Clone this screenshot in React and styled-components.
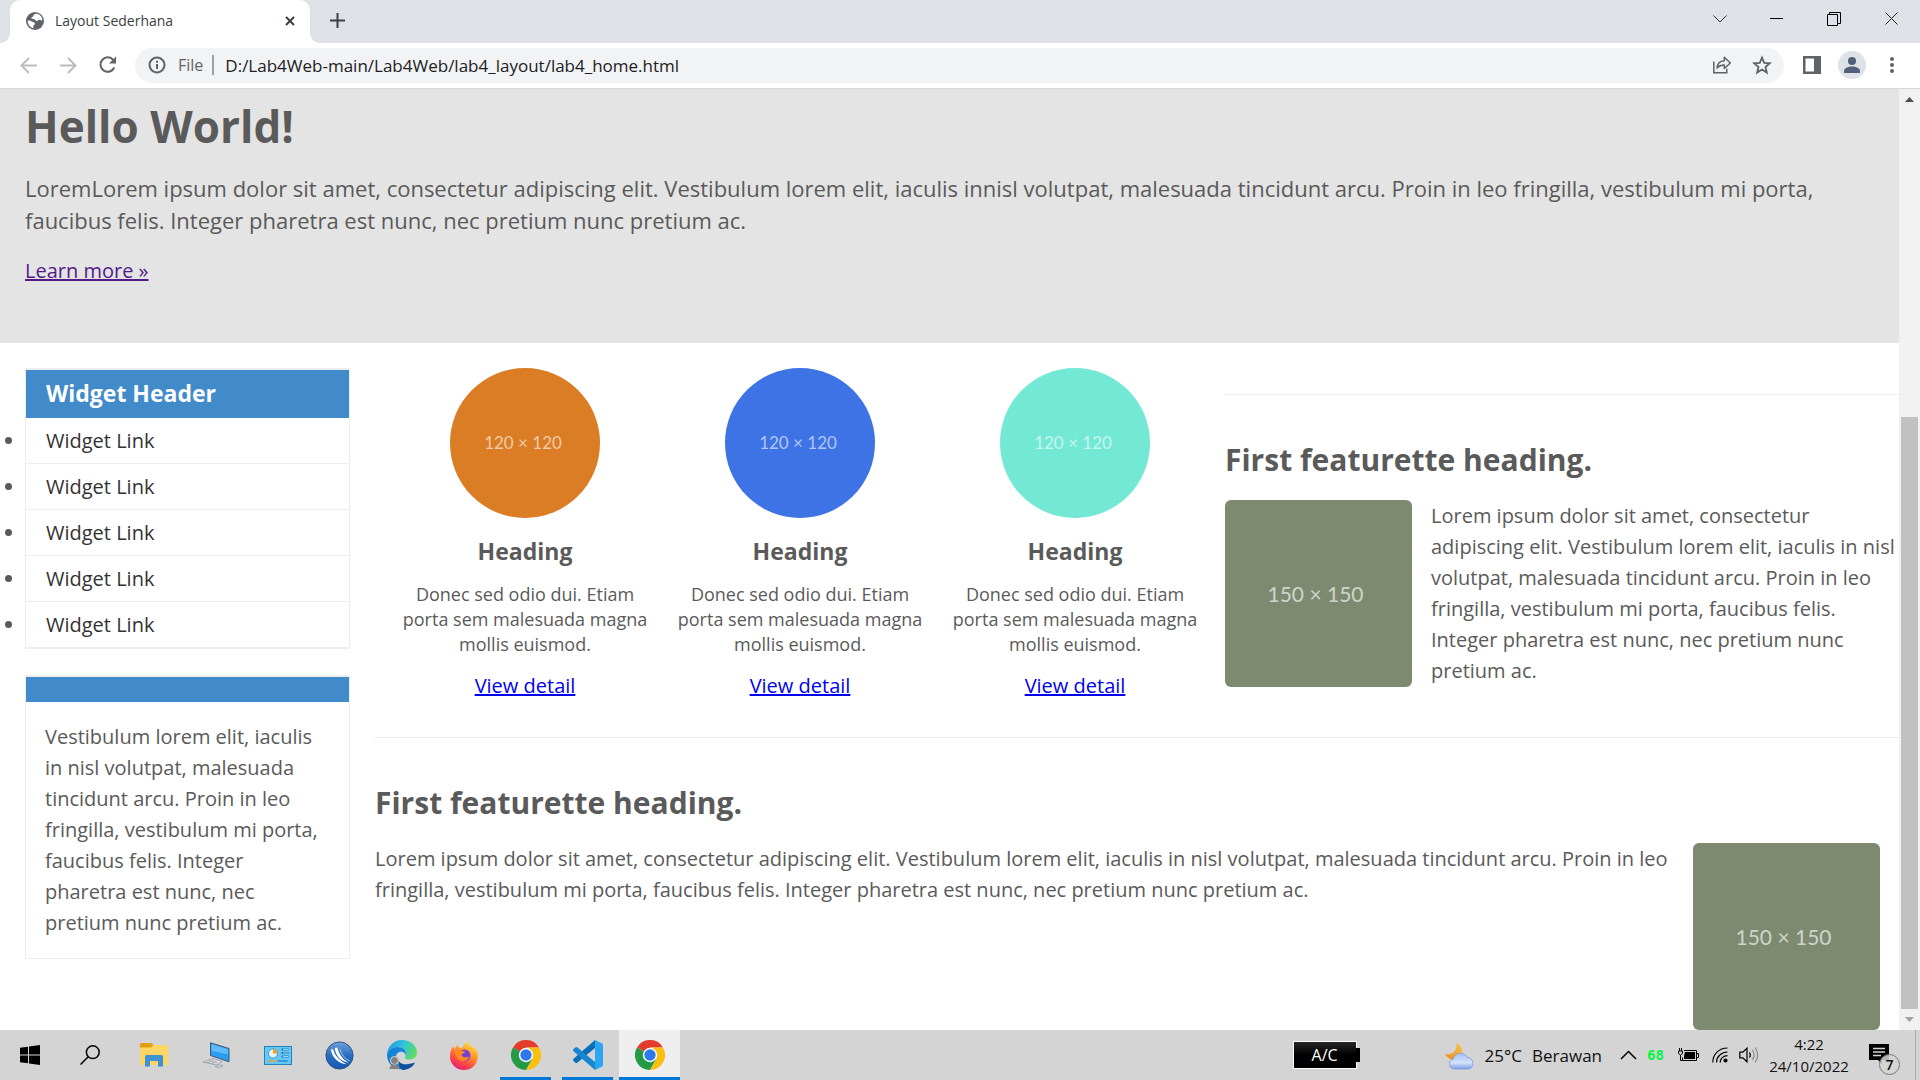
import React from 'react';
import styled, { createGlobalStyle } from 'styled-components';

const GlobalStyle = createGlobalStyle`
  * { box-sizing: border-box; }
  html, body { margin: 0; padding: 0; }
  body { background: #fff; font-family: "Open Sans", "Noto Sans", sans-serif; }
  h1, h2, h3, p, ul { margin: 0; padding: 0; }
  button { border: 0; padding: 0; background: none; font: inherit; color: inherit; }
  svg { display: block; }
`;

const Screen = styled.div`
  display: flex;
  flex-direction: column;
  height: 100vh;
  overflow: hidden;
`;

/* ---------- browser frame ---------- */

const TabStrip = styled.div`
  display: flex;
  height: 43px;
  padding-left: 10px;
  background: #dee1e6;
  color: #3c4043;
`;

const Tab = styled.div`
  position: relative;
  display: flex;
  align-items: center;
  width: 300px;
  height: 43px;
  padding: 0 12px 2px 16px;
  border-radius: 10px 10px 0 0;
  background: #fff;
  &::before, &::after {
    content: "";
    position: absolute;
    bottom: 0;
    width: 10px;
    height: 10px;
  }
  &::before {
    left: -10px;
    background: radial-gradient(circle at 0 0, transparent 10px, #fff 10px);
  }
  &::after {
    right: -10px;
    background: radial-gradient(circle at 100% 0, transparent 10px, #fff 10px);
  }
`;

const TabTitle = styled.span`
  flex: 1;
  padding-left: 11px;
  font-size: 14px;
  line-height: 20px;
`;

const IconButton = styled.button`
  display: flex;
  flex: none;
  align-items: center;
  justify-content: center;
  width: ${(p) => p.$w || 40}px;
  height: ${(p) => p.$h || 34}px;
  color: ${(p) => p.$color || '#5f6368'};
`;

const WindowButtons = styled.div`
  display: flex;
  margin-left: auto;
  color: #111;
`;

const Toolbar = styled.div`
  display: flex;
  align-items: center;
  height: 46px;
  padding: 1px 8px 2px;
  border-bottom: 1px solid #d5d7da;
  background: #fff;
`;

const Omnibox = styled.div`
  display: flex;
  flex: 1;
  align-items: center;
  height: 35px;
  margin: 0 8px 0 7px;
  padding: 0 2px 0 13px;
  border-radius: 18px;
  background: #f1f3f4;
`;

const Scheme = styled.label`
  padding: 0 9px 0 12px;
  border-right: 2px solid #9aa0a6;
  font-size: 16px;
  line-height: 20px;
  color: #5f6368;
`;

const UrlInput = styled.input`
  flex: 1;
  min-width: 0;
  padding: 1px 0 0 11px;
  border: 0;
  outline: 0;
  background: none;
  font: 17px/24px "Open Sans", sans-serif;
  color: #202124;
`;

/* ---------- web page ---------- */

const Viewport = styled.div`
  display: flex;
  flex: 1;
  min-height: 0;
`;

const Page = styled.div`
  flex: 1;
  min-width: 0;
  overflow: hidden;
  background: #fff;
  font-size: 20px;
  line-height: 31px;
  color: #5a5a5a;
`;

const Hero = styled.section`
  padding: 7px 25px 57px;
  background: #e4e4e4;
`;

const HeroTitle = styled.h1`
  margin-bottom: 16px;
  font-size: 44px;
  line-height: 60px;
`;

const HeroText = styled.p`
  margin-bottom: 19px;
  font-size: 22px;
  line-height: 32px;
`;

const HeroLink = styled.a`
  display: inline-block;
  line-height: 30px;
  color: #551a8b;
`;

const Columns = styled.div`
  display: flex;
  align-items: flex-start;
  gap: 25px;
  padding: 25px 0 0 25px;
`;

const Sidebar = styled.aside`
  display: grid;
  flex: none;
  gap: 26px;
  width: 325px;
`;

const Widget = styled.section`
  border: 1px solid #eee;
`;

const WidgetTitle = styled.h3`
  min-height: 26px;
  padding: 8px 20px 10px;
  border-top: 1px solid #eee;
  background: #428bca;
  font-size: 23px;
  line-height: 30px;
  color: #fff;
`;

const WidgetLink = styled.li`
  height: 46px;
  padding: 7px 20px;
  border-bottom: 1px solid #eee;
  a { color: #333; text-decoration: none; }
`;

const WidgetText = styled.p`
  padding: 19px 19px 20px;
`;

const Main = styled.main`
  flex: 1;
  min-width: 0;
`;

const TopRow = styled.div`
  display: grid;
  grid-template-columns: repeat(3, 250px) 1fr;
  gap: 25px;
  margin-bottom: 36px;
  padding-left: 25px;
`;

const Box = styled.article`
  display: flex;
  flex-direction: column;
  align-items: center;
  text-align: center;
`;

const Circle = styled.div`
  width: 150px;
  height: 150px;
  padding-right: 4px;
  border-radius: 50%;
  background: ${(p) => p.$color};
  font-family: Lato, "Open Sans", sans-serif;
  font-size: 17px;
  line-height: 150px;
  color: rgba(255, 255, 255, 0.6);
`;

const BoxTitle = styled.h3`
  margin: 17px 0 15px;
  font-size: 23px;
  line-height: 32px;
`;

const BoxText = styled.p`
  margin-bottom: 14px;
  font-size: 18px;
  line-height: 25px;
`;

const BoxLink = styled.a`
  line-height: 30px;
  color: #0000ee;
`;

const Feature = styled.section`
  padding-top: ${(p) => p.$top || 0}px;
`;

const FeatureTitle = styled.h2`
  padding: 45px 0 20px;
  border-top: 1px solid #eee;
  font-size: 30px;
  line-height: 40px;
`;

const FeatureBody = styled.div`
  display: flex;
  flex-direction: ${(p) => (p.$reverse ? 'row-reverse' : 'row')};
  align-items: flex-start;
  gap: 19px;
  padding-right: ${(p) => (p.$reverse ? 19 : 0)}px;
  p { flex: 1; }
`;

const Square = styled.div`
  flex: none;
  width: 187px;
  height: 187px;
  padding-right: 6px;
  border-radius: 6px;
  background: #7d8a70;
  font-family: Lato, "Open Sans", sans-serif;
  font-size: 21px;
  line-height: 187px;
  text-align: center;
  color: rgba(255, 255, 255, 0.65);
`;

const Scrollbar = styled.div`
  display: flex;
  flex: none;
  flex-direction: column;
  width: 21px;
  padding: 0 2px;
  background: #f1f1f1;
`;

const TrackGap = styled.div`
  flex: 307;
`;

const Thumb = styled.div`
  flex: 592;
  background: #c1c1c1;
`;

/* ---------- taskbar ---------- */

const Taskbar = styled.footer`
  display: flex;
  flex: none;
  height: 50px;
  background: #d4d4d4;
  color: #111;
`;

const TaskGroup = styled.div`
  display: flex;
  padding-left: 3px;
`;

const TaskButton = styled.button`
  display: flex;
  align-items: center;
  justify-content: center;
  width: ${(p) => p.$w || 61}px;
  height: 50px;
  margin-right: 1px;
  background: ${(p) => (p.$active ? '#eeeeee' : 'none')};
  box-shadow: ${(p) => (p.$active ? 'inset 0 -3px #0078d7' : 'none')};
`;

const RunningMark = styled.span`
  display: flex;
  align-items: center;
  justify-content: center;
  width: 51px;
  height: 50px;
  box-shadow: inset 0 -3px #0078d7;
`;

const Tray = styled.div`
  display: flex;
  align-items: center;
  margin-left: auto;
  border-right: 1px solid #a9a9a9;
  margin-right: 4px;
`;

const PowerBadge = styled.div`
  position: relative;
  width: 64px;
  height: 28px;
  margin-right: 88px;
  border: 1px solid #fff;
  background: linear-gradient(#262626, #000 50%);
  font-size: 16px;
  line-height: 26px;
  text-align: center;
  color: #fff;
  &::after {
    content: "";
    position: absolute;
    top: 6px;
    right: -4px;
    width: 4px;
    height: 14px;
    background: #000;
  }
`;

const Weather = styled.button`
  display: flex;
  align-items: center;
  gap: 10px;
  margin-right: 15px;
  padding-top: 2px;
  font-size: 17px;
  line-height: 24px;
`;

const Counter = styled.span`
  width: 33px;
  font: bold 14px/20px "DejaVu Sans Mono", monospace;
  color: #00f83c;
  text-align: center;
`;

const Clock = styled.button`
  width: 92px;
  padding-bottom: 1px;
  font-size: 15px;
  line-height: 22px;
  text-align: center;
`;

const Notifications = styled.button`
  position: relative;
  width: 34px;
  height: 50px;
  margin: 0 12px 0 14px;
`;

const Badge = styled.span`
  position: absolute;
  top: 24px;
  left: 10px;
  width: 21px;
  height: 21px;
  border: 1px solid #777;
  border-radius: 50%;
  background: rgba(212, 212, 212, 0.85);
  font-size: 14px;
  font-weight: 600;
  line-height: 19px;
  text-align: center;
`;

const MessageHolder = styled.span`
  display: block;
  padding-bottom: 2px;
`;

/* ---------- drawings ---------- */

const Line = ({ w, h = w, d, sw = 2, ...rest }) => (
  <svg width={w} height={h} viewBox={`0 0 ${w} ${h}`} fill="none" stroke="currentColor" strokeWidth={sw} {...rest}>
    <path d={d} />
  </svg>
);

const GlobeIcon = () => (
  <svg width="18" height="18" viewBox="0 0 18 18">
    <circle cx="9" cy="9" r="9" fill="#5f6368" />
    <path d="M10 1.600c-1 1-2.600.7-2.600 2.200 0 1.300-2 .8-2 2.200s1.400 1 2.800 1.200c1.400.2 1 1.700 2.600 1.700 1.200 0 1.300-1.200 2.600-1.200 1.400 0 1.800.8 3 .8A7.400 7.400 0 0 0 10 1.600zM1.700 8.600c1.600-.2 3 .2 4.200 1 1.400.9 3 .6 3 2.200 0 1.400-1.600 1.200-1.600 2.600v1.800A7.400 7.400 0 0 1 1.700 8.600z" fill="#fff" />
  </svg>
);

const ReloadIcon = () => (
  <svg width="20" height="20" viewBox="0 0 20 20" fill="none">
    <path d="M16.300 12.500A7.200 7.200 0 1 1 15.300 5" stroke="#5f6368" strokeWidth="2" />
    <path d="M18 1.500v7h-7z" fill="#5f6368" />
  </svg>
);

const InfoIcon = () => (
  <svg width="18" height="18" viewBox="0 0 18 18" fill="none" stroke="#5f6368" strokeWidth="2">
    <circle cx="9" cy="9" r="7.500" />
    <path d="M9 8v5M9 4.800v2" />
  </svg>
);

const ShareIcon = () => (
  <svg width="20" height="20" viewBox="0 0 20 20" fill="none" stroke="#5f6368" strokeWidth="1.500">
    <path d="M1.800 6.500v11.200h13v-4" />
    <path d="M5 13c.4-4.500 3-7 7.300-7.300V2.300L18.300 8l-6 5.500V10C9 10 7 10.800 5 13z" strokeLinejoin="round" />
  </svg>
);

const StarIcon = () => (
  <svg width="20" height="20" viewBox="0 0 20 20" fill="none" stroke="#5f6368" strokeWidth="1.800">
    <path d="M10 2.600l2.200 5.200 5.600.5-4.300 3.700 1.300 5.500L10 14.600l-4.800 2.900L6.500 12 2.200 8.300l5.600-.5z" />
  </svg>
);

const PanelIcon = () => (
  <svg width="18" height="18" viewBox="0 0 18 18">
    <path d="M0 0h18v18H0zM2.500 2.500v13h8.500v-13z" fillRule="evenodd" fill="#5f6368" />
  </svg>
);

const AvatarIcon = () => (
  <svg width="28" height="28" viewBox="0 0 28 28">
    <circle cx="14" cy="14" r="14" fill="#dee1e6" />
    <circle cx="14" cy="10" r="4" fill="#50607a" />
    <path d="M6 22v-2c0-3 4-4.500 8-4.500s8 1.500 8 4.500v2z" fill="#50607a" />
  </svg>
);

const DotsIcon = () => (
  <svg width="4" height="18" viewBox="0 0 4 18" fill="#5f6368">
    <circle cx="2" cy="3" r="2" /><circle cx="2" cy="9" r="2" /><circle cx="2" cy="15" r="2" />
  </svg>
);

const RestoreIcon = () => (
  <svg width="14" height="14" viewBox="0 0 14 14" fill="none" stroke="#000" strokeWidth="1">
    <path d="M.5 2.500h10v11H.5zM2.500 2.500v-2h11v11h-2.500" />
  </svg>
);

const WindowsIcon = () => (
  <svg width="20" height="20" viewBox="0 0 20 20">
    <path d="M0 2.800L8 1.700v7.800H0zM9 1.500L20 0v9.500H9zM0 10.500h8v7.800l-8-1.100zM9 10.500h11V20L9 18.500z" />
  </svg>
);

const FolderIcon = () => (
  <svg width="28" height="24" viewBox="0 0 28 24">
    <path d="M0 1.500Q0 0 1.500 0h10L13.500 2 12 5H0z" fill="#e0a010" />
    <path d="M0 4.500h11l2.500-2.500H28v20H0z" fill="#ffd666" />
    <path d="M5 23.500V13.500q0-1.500 1.500-1.500h15q1.500 0 1.500 1.500v10h-5v-5.500h-8v5.500z" fill="#3c92d4" />
  </svg>
);

const LaptopIcon = () => (
  <svg width="28" height="27" viewBox="0 0 28 27">
    <path d="M8.500.8L27 6.500v13.300L8.500 13.500z" fill="#2a9df0" stroke="#44566a" strokeWidth="1" />
    <path d="M9.500 2.300l16.500 5v5L9.500 9z" fill="#5cbcfb" />
    <path d="M1 20l10-3.500 9 3-5 3.500z" fill="#dfe3e7" stroke="#8b949c" strokeWidth=".7" />
    <path d="M4 20l9 2.500M7 18.500l9 2.700M5 21l7-3.500M9 22l6-3.500" stroke="#9aa3ab" strokeWidth=".7" />
    <path d="M13 24.500l4-2 4 1.300-3.500 2z" fill="#c9ced3" stroke="#8b949c" strokeWidth=".6" />
  </svg>
);

const PanelAppIcon = () => (
  <svg width="28" height="19" viewBox="0 0 28 19">
    <rect x=".5" y=".5" width="27" height="18" fill="#62c8f8" stroke="#2283b8" />
    <circle cx="9" cy="7.500" r="4.500" fill="#e8f6ff" stroke="#2673a8" strokeWidth=".7" />
    <path d="M9 7.500V3a4.500 4.500 0 0 1 4.500 4.500z" fill="#f5a11c" />
    <path d="M17.500 3.500h7M17.500 7h7M17.500 10.500h7" stroke="#1f78b8" strokeWidth="2" />
    <path d="M19 3.500h5M19 7h5M19 10.500h5" stroke="#bfeaff" strokeWidth=".8" />
    <path d="M4 15h8.500" stroke="#f5a11c" strokeWidth="1.500" />
    <path d="M13.500 15h10" stroke="#1f78b8" strokeWidth="1.200" />
  </svg>
);

const BallIcon = () => (
  <svg width="29" height="29" viewBox="0 0 29 29" fill="none">
    <defs>
      <linearGradient id="ball" x1="0" y1="0" x2="0" y2="1">
        <stop offset="0" stopColor="#6fa3dc" /><stop offset=".5" stopColor="#2a6cc0" /><stop offset="1" stopColor="#1658b0" />
      </linearGradient>
    </defs>
    <circle cx="14.500" cy="14.500" r="13.600" fill="url(#ball)" stroke="#2d5685" strokeWidth="1" />
    <path d="M6 8.500c1 8 7 14 15.500 14.800-6-3.500-12-8-13.500-15.300z" fill="#fff" />
    <path d="M9.800 7c.8 8 6 13.500 14 14.700-5.500-3.200-10-8-11.500-15.200z" fill="#fff" />
    <path d="M15 8c1 5 4.500 9.500 9.800 12" stroke="#a9c8ee" strokeWidth="1" />
  </svg>
);

const EdgeIcon = () => (
  <svg width="30" height="30" viewBox="0 0 30 30">
    <defs>
      <linearGradient id="edgeTop" x1="0" y1=".3" x2="1" y2=".6">
        <stop offset="0" stopColor="#1b9de2" /><stop offset=".5" stopColor="#33c4d8" /><stop offset="1" stopColor="#62de5c" />
      </linearGradient>
    </defs>
    <path d="M0 15a15 15 0 0 1 15-15c9 0 15 6 15 12.500 0 5-4 7-7.500 7-4 0-5-1.500-4.300-2.700C19.500 14.500 18 7 10 7 4 7 .5 11 0 15z" fill="url(#edgeTop)" />
    <path d="M0 15c.5-4 4-8 10-8 6 0 9.500 4 9 8-1-2-3-3.200-5-3.200-4 0-6 4-5 8.200 1 4 4 7 7.500 9C7 31 0 23 0 15z" fill="#1583d8" />
    <path d="M11.500 20c1 4 6 6 16.500 2.500C25.500 28 20 30 15.500 30c-3-2-5-6-4-10z" fill="#0f529c" />
    <circle cx="7.500" cy="20.500" r="4" fill="#85827f" stroke="#d6d6d6" strokeWidth="1" />
    <path d="M2.500 29c0-3 2-4.500 5-4.500s5 1.500 5 4.500z" fill="#85827f" />
  </svg>
);

const FirefoxIcon = () => (
  <svg width="28" height="29" viewBox="0 0 28 29">
    <defs>
      <linearGradient id="fox" x1=".8" y1="0" x2=".3" y2="1">
        <stop offset="0" stopColor="#fff04a" /><stop offset=".4" stopColor="#ff9a2a" /><stop offset=".75" stopColor="#ff4545" /><stop offset="1" stopColor="#e01c78" />
      </linearGradient>
    </defs>
    <path d="M3 5.500C3.500 6.500 4 7.200 5 8c.2-1.500 1-2.800 2.500-4 .3 2 2 2.600 4 3.300C13.500 4 16 2 18 0c.5 3.500 3 5 4.500 7l1-1.800c3 3 4.500 6.800 4.500 9.800 0 8-6 14-14 14S0 23 0 15.500c0-4 1-7.500 3-10z" fill="url(#fox)" />
    <circle cx="14.500" cy="14.500" r="6" fill="#7741d8" />
    <path d="M5 9c3-1 5-.5 6.500.7l3.500.8c-.5 2-3 2-3.500 3.500 1 3 5 2.500 7.500 1.500-1 4-4 5-7 4.500C8 19.500 5 15 5 9z" fill="#ff8a20" />
    <path d="M16 8.500c4 0 6 3.500 5.500 7 2-3 2-7-1.500-10z" fill="#ffb52e" />
  </svg>
);

const ChromeIcon = () => (
  <svg width="30" height="30" viewBox="0 0 30 30">
    <path d="M15 15L2 7.500A15 15 0 0 1 28 7.500H15z" fill="#e33b2e" />
    <path d="M15 15L2 7.500A15 15 0 0 0 15 30l6.500-11.200z" fill="#249a45" />
    <path d="M15 7.500h13A15 15 0 0 1 15 30l6.500-11.200z" fill="#fbbf12" />
    <circle cx="15" cy="15" r="7.200" fill="#fff" />
    <circle cx="15" cy="15" r="5.700" fill="#2f78ec" />
  </svg>
);

const CodeIcon = () => (
  <svg width="30" height="30" viewBox="0 0 30 30">
    <path d="M22 0v8L4.500 22.500q-1.200 1-2.300 0L.5 21q-1-1.200 0-2.300z" fill="#0a70b8" />
    <path d="M22 30v-8L4.500 7.500q-1.200-1-2.300 0L.5 9q-1 1.200 0 2.300z" fill="#1687d0" />
    <path d="M22 0l6.800 3.200Q30 3.800 30 5v20q0 1.200-1.200 1.800L22 30z" fill="#2aa6f2" />
  </svg>
);

const MoonCloudIcon = () => (
  <svg width="30" height="27" viewBox="0 0 30 27">
    <defs>
      <linearGradient id="cloud" x1="0" y1="0" x2="0" y2="1">
        <stop offset="0" stopColor="#a6c0f2" /><stop offset=".6" stopColor="#d4e2fa" /><stop offset="1" stopColor="#7d9fe6" />
      </linearGradient>
      <linearGradient id="moon" x1="1" y1="0" x2="0" y2="1">
        <stop offset="0" stopColor="#f9c64a" /><stop offset="1" stopColor="#f08a1c" />
      </linearGradient>
    </defs>
    <path d="M11 0c6 2 8 9 3.500 13.500C10 18 3 17 0 11c5 1.500 13-1 11-11z" fill="url(#moon)" />
    <path d="M9 26a5 5 0 0 1-.8-9.800 7.500 7.500 0 0 1 14-1.800A6 6 0 0 1 24 26z" fill="url(#cloud)" stroke="#7c9be0" strokeWidth=".8" />
  </svg>
);

const BatteryIcon = () => (
  <svg width="21" height="14" viewBox="0 0 21 14" fill="none" stroke="#000">
    <path d="M6 2.500h12.500v10H4.500v-3M19 5.500h1.500v4H19" />
    <path d="M7 4h10v7H6V8z" fill="#000" stroke="none" />
    <path d="M.5 3h4v2.500l-2 1.500-2-1.500zM1.500 3V0M3.500 3V0M2.500 7v5.500h2" />
  </svg>
);

const WifiIcon = () => (
  <svg width="16" height="16" viewBox="0 0 16 16" fill="none" stroke="#000" strokeWidth="1.200">
    <path d="M.8 15.500C.8 7 7 1 15.500 1M4.500 15.500c0-6 5-10.500 11-10.500M8.200 15.500c0-4 3-6.800 7.300-6.800" />
    <circle cx="13.500" cy="13.500" r="1.500" fill="#000" />
  </svg>
);

const SpeakerIcon = () => (
  <svg width="20" height="18" viewBox="0 0 20 18" fill="none" stroke="#000" strokeWidth="1.200">
    <path d="M.8 6.200h3L8 2.200v13.600l-4.200-4h-3z" />
    <path d="M10.500 6.500c1 1.500 1 3.500 0 5" />
    <path d="M13.300 4c2.300 3 2.300 7 0 10M16 1.500c3.500 4.500 3.500 10.500 0 15" stroke="#888" />
  </svg>
);

const MessageIcon = () => (
  <svg width="20" height="20" viewBox="0 0 20 20">
    <path d="M0 0h20v16h-7v4l-4-4H0z" />
    <path d="M4 4.500h12M4 8h12M4 11.500h8" stroke="#d4d4d4" strokeWidth="1.300" />
  </svg>
);

/* ---------- content ---------- */

const lorem =
  'Lorem ipsum dolor sit amet, consectetur adipiscing elit. Vestibulum lorem elit, iaculis in nisl volutpat, malesuada tincidunt arcu. Proin in leo fringilla, vestibulum mi porta, faucibus felis. Integer pharetra est nunc, nec pretium nunc pretium ac.';

const circles = ['#da7d25', '#3e73e6', '#73e8d5'];

const tasks = [
  { name: 'File Explorer', Icon: FolderIcon },
  { name: 'This PC', Icon: LaptopIcon },
  { name: 'Control Panel', Icon: PanelAppIcon },
  { name: 'Network', Icon: BallIcon },
  { name: 'Edge', Icon: EdgeIcon },
  { name: 'Firefox', Icon: FirefoxIcon },
  { name: 'Chrome', Icon: ChromeIcon, running: true },
  { name: 'Code', Icon: CodeIcon, running: true },
  { name: 'Chrome window', Icon: ChromeIcon, active: true },
];

function BrowserFrame() {
  return (
    <header>
      <TabStrip>
        <Tab>
          <GlobeIcon />
          <TabTitle>Layout Sederhana</TabTitle>
          <IconButton $w={16} $h={20} $color="#3c4043" aria-label="Close tab">
            <Line w={10} d="M1 1l8 8M9 1l-8 8" />
          </IconButton>
        </Tab>
        <IconButton $w={54} $h={41} $color="#3c4043" aria-label="New tab">
          <Line w={15} d="M7.500 0v15M0 7.500h15" />
        </IconButton>
        <WindowButtons>
          <IconButton $w={57} $h={37} $color="#333" aria-label="Search tabs"><Line w={14} h={8} sw={1} d="M.5 .5l6.500 6.500 6.500-6.500" /></IconButton>
          <IconButton $w={57} $h={37} $color="#000" aria-label="Minimize"><Line w={13} h={1} d="M0 .5h13" sw={1} /></IconButton>
          <IconButton $w={58} $h={37} aria-label="Restore"><RestoreIcon /></IconButton>
          <IconButton $w={57} $h={37} $color="#222" aria-label="Close"><Line w={13} sw={1} d="M.5 .5l12 12M12.500 .5l-12 12" /></IconButton>
        </WindowButtons>
      </TabStrip>
      <Toolbar>
        <IconButton $color="#babcbe" aria-label="Back"><Line w={17} sw={2} d="M17 8.500H2M9 1L1.500 8.500 9 16" /></IconButton>
        <IconButton $color="#babcbe" aria-label="Forward"><Line w={17} sw={2} d="M0 8.500h15M8 1l7.500 7.500L8 16" /></IconButton>
        <IconButton aria-label="Reload"><ReloadIcon /></IconButton>
        <Omnibox>
          <InfoIcon />
          <Scheme htmlFor="url">File</Scheme>
          <UrlInput id="url" defaultValue="D:/Lab4Web-main/Lab4Web/lab4_layout/lab4_home.html" />
          <IconButton aria-label="Share"><ShareIcon /></IconButton>
          <IconButton aria-label="Bookmark"><StarIcon /></IconButton>
        </Omnibox>
        <IconButton aria-label="Side panel"><PanelIcon /></IconButton>
        <IconButton aria-label="Profile"><AvatarIcon /></IconButton>
        <IconButton aria-label="Menu"><DotsIcon /></IconButton>
      </Toolbar>
    </header>
  );
}

function WebPage() {
  return (
    <Page>
      <Hero>
        <HeroTitle>Hello World!</HeroTitle>
        <HeroText>
          LoremLorem ipsum dolor sit amet, consectetur adipiscing elit. Vestibulum lorem elit, iaculis innisl
          volutpat, malesuada tincidunt arcu. Proin in leo fringilla, vestibulum mi porta, faucibus felis.
          Integer pharetra est nunc, nec pretium nunc pretium ac.
        </HeroText>
        <HeroLink href="#">Learn more »</HeroLink>
      </Hero>
      <Columns>
        <Sidebar>
          <Widget>
            <WidgetTitle>Widget Header</WidgetTitle>
            <ul>
              {[1, 2, 3, 4, 5].map((n) => (
                <WidgetLink key={n}><a href="#">Widget Link</a></WidgetLink>
              ))}
            </ul>
          </Widget>
          <Widget>
            <WidgetTitle as="div" />
            <WidgetText>
              Vestibulum lorem elit, iaculis in nisl volutpat, malesuada tincidunt arcu. Proin in leo fringilla,
              vestibulum mi porta, faucibus felis. Integer pharetra est nunc, nec pretium nunc pretium ac.
            </WidgetText>
          </Widget>
        </Sidebar>
        <Main>
          <TopRow>
            {circles.map((color) => (
              <Box key={color}>
                <Circle $color={color}>120 × 120</Circle>
                <BoxTitle>Heading</BoxTitle>
                <BoxText>Donec sed odio dui. Etiam porta sem malesuada magna mollis euismod.</BoxText>
                <BoxLink href="#">View detail</BoxLink>
              </Box>
            ))}
            <Feature $top={26}>
              <FeatureTitle>First featurette heading.</FeatureTitle>
              <FeatureBody>
                <Square>150 × 150</Square>
                <p>{lorem}</p>
              </FeatureBody>
            </Feature>
          </TopRow>
          <Feature>
            <FeatureTitle>First featurette heading.</FeatureTitle>
            <FeatureBody $reverse>
              <Square>150 × 150</Square>
              <p>{lorem}</p>
            </FeatureBody>
          </Feature>
        </Main>
      </Columns>
    </Page>
  );
}

function SystemTaskbar() {
  return (
    <Taskbar>
      <TaskButton $w={60} aria-label="Start"><WindowsIcon /></TaskButton>
      <TaskButton $w={58} aria-label="Search">
        <svg width="20" height="20" viewBox="0 0 20 20" fill="none" stroke="#000" strokeWidth="1.500">
          <circle cx="12.800" cy="7.200" r="6.400" /><path d="M8.200 11.800L.5 19.500" />
        </svg>
      </TaskButton>
      <TaskGroup>
        {tasks.map(({ name, Icon, running, active }) => (
          <TaskButton key={name} $active={active} aria-label={name}>
            {running ? <RunningMark><Icon /></RunningMark> : <Icon />}
          </TaskButton>
        ))}
      </TaskGroup>
      <Tray>
        <PowerBadge>A/C</PowerBadge>
        <Weather>
          <MoonCloudIcon />
          <span>25°C</span>
          <span>Berawan</span>
        </Weather>
        <IconButton $w={22} $color="#000" aria-label="Hidden icons"><Line w={17} h={10} sw={1.5} d="M1 9l7.500-7.500L16 9" /></IconButton>
        <Counter>68</Counter>
        <IconButton $w={33} aria-label="Battery"><BatteryIcon /></IconButton>
        <IconButton $w={30} aria-label="Wi-Fi"><WifiIcon /></IconButton>
        <IconButton $w={28} aria-label="Volume"><SpeakerIcon /></IconButton>
        <Clock>4:22<br />24/10/2022</Clock>
        <Notifications aria-label="Notifications">
          <MessageHolder><MessageIcon /></MessageHolder>
          <Badge>7</Badge>
        </Notifications>
      </Tray>
    </Taskbar>
  );
}

export default function App() {
  return (
    <Screen>
      <GlobalStyle />
      <BrowserFrame />
      <Viewport>
        <WebPage />
        <Scrollbar>
          <IconButton $w={17} $h={21} aria-label="Scroll up">
            <svg width="9" height="5" viewBox="0 0 9 5"><path d="M4.500 0L9 5H0z" fill="#505050" /></svg>
          </IconButton>
          <TrackGap />
          <Thumb />
          <IconButton $w={17} $h={21} aria-label="Scroll down">
            <svg width="9" height="5" viewBox="0 0 9 5"><path d="M4.500 5L9 0H0z" fill="#a3a3a3" /></svg>
          </IconButton>
        </Scrollbar>
      </Viewport>
      <SystemTaskbar />
    </Screen>
  );
}
